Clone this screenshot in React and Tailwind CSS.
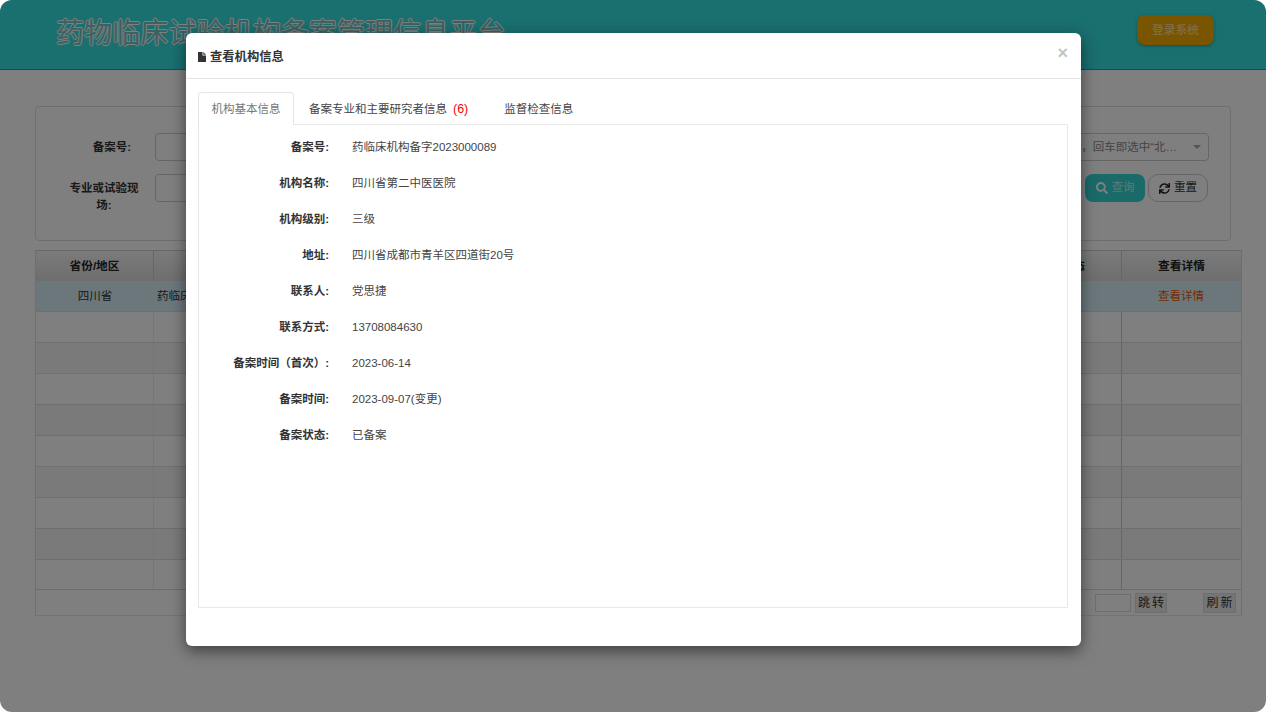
import React from 'react';
import { FaSearch, FaSync } from 'react-icons/fa';

const rows = [
  ['备案号', '药临床机构备字2023000089'],
  ['机构名称', '四川省第二中医医院'],
  ['机构级别', '三级'],
  ['地址', '四川省成都市青羊区四道街20号'],
  ['联系人', '党思捷'],
  ['联系方式', '13708084630'],
  ['备案时间（首次）', '2023-06-14'],
  ['备案时间', '2023-09-07(变更)'],
  ['备案状态', '已备案'],
];

const blankRows = [0, 1, 2, 3, 4, 5, 6, 7];

function BlankRow({ i, tall }) {
  return (
    <div className={`${tall ? 'h-[31px]' : 'h-[30px]'} flex border-t border-[#dedede] ${i % 2 === 0 ? 'bg-white' : 'bg-[#f4f4f4]'}`}>
      <span className="w-[118px] border-r border-[#ececec]" />
      <span className="flex-1" />
      <span className="w-[120px] border-l border-[#cccccc]" />
    </div>
  );
}

function Background() {
  return (
    <div className="h-[712px] w-[1266px] rounded-[12px] bg-white overflow-hidden">
      <header className="h-[70px] flex justify-between pl-[56px] pr-[52px] bg-[#35dede] border-b border-[#1aa0a0]">
        <h1 className="mt-[16px] h-[36px] text-[28.1px] leading-[36px] text-[#74c4c4] [text-shadow:1px_0_0_#fff,-1px_0_0_#fff,0_1px_0_#fff,0_-1px_0_#fff]">药物临床试验机构备案管理信息平台</h1>
        <button className="mt-[15px] pt-[2px] w-[77px] h-[30px] rounded-[8px] bg-[#f5ab00] text-[11.8px] text-white/70 shadow-[0_1px_3px_rgba(0,0,0,0.3)]">登录系统</button>
      </header>
      <main className="pl-[35px] pt-[36px]">
        <section className="w-[1196px] h-[135px] border border-[#ddd] rounded-[4px] flex flex-col gap-[13px] pt-[26px] text-[11.5px] font-bold text-[#333]">
          <div className="flex items-center h-[28px]">
            <span className="w-[95px] text-right pt-[1px]">备案号:</span>
            <div className="ml-[24px] w-[300px] h-[28px] border border-[#ccc] rounded-[4px]" />
            <div className="ml-auto mr-[21px] w-[340px] h-[28px] border border-[#ccc] rounded-[4px] flex items-center justify-end pr-[7px] font-normal text-[#888]">
              <span className="whitespace-nowrap pt-[1px]">输入省份/地区文字，回车即选中“北…</span>
              <span className="ml-[16px] w-0 h-0 border-x-[4px] border-x-transparent border-t-[4px] border-t-[#aaa]" />
            </div>
          </div>
          <div className="flex items-center h-[28px]">
            <span className="self-start mt-[6px] w-[103px] pl-[33px] text-center leading-[17px]">专业或试验现场:</span>
            <div className="ml-[16px] w-[300px] h-[28px] border border-[#ccc] rounded-[4px]" />
            <button className="ml-auto w-[60px] h-[28px] rounded-[8px] bg-[#34d4d4] text-white/70 font-normal flex items-center justify-center gap-[4px]">
              <FaSearch className="w-[12px] h-[12px] text-white" />查询
            </button>
            <button className="ml-[3px] mr-[22px] w-[60px] h-[28px] rounded-[10px] border border-[#ccc] bg-white text-[#333] font-normal flex items-center justify-center gap-[4px]">
              <FaSync className="w-[11px] h-[11px] text-[#222]" />重置
            </button>
          </div>
        </section>
        <section className="mt-[9px] w-[1207px] border-x border-[#ddd]">
          <div className="h-[31px] flex items-center text-[11.7px] font-bold text-[#222] bg-gradient-to-b from-[#f6f6f6] to-[#dcdcdc] border-t border-[#d0d0d0]">
            <span className="w-[118px] text-center border-r border-[#ccc] leading-[30px]">省份/地区</span>
            <span className="flex-1 text-right pr-[36px]">备案状态</span>
            <span className="w-[120px] text-center border-l border-[#ccc] leading-[30px]">查看详情</span>
          </div>
          <div className="h-[30px] flex items-center text-[11.5px] text-[#333] bg-[#d9eef8] pt-[1px]">
            <span className="w-[118px] text-center">四川省</span>
            <span className="flex-1 pl-[3px]">药临床机构备字</span>
            <span className="w-[120px] text-center text-[#e8590c]">查看详情</span>
          </div>
          {blankRows.map((i) => (
            <BlankRow key={i} i={i} tall />
          ))}
          <BlankRow i={8} />
          <div className="h-[27px] flex items-center justify-end border-t border-[#d8d8d8] border-b border-b-[#e8e8e8] text-[12px] text-[#333] tracking-[2px]">
            <div className="w-[36px] h-[18px] border border-[#ddd]" />
            <button className="ml-[4px] pl-[2px] w-[32px] h-[20px] bg-[#ebebeb] border border-[#ddd]">跳转</button>
            <button className="ml-[36px] mr-[5px] pl-[2px] w-[33px] h-[20px] bg-[#ebebeb] border border-[#ddd]">刷新</button>
          </div>
        </section>
      </main>
    </div>
  );
}

function Modal() {
  return (
    <div className="absolute left-[186px] top-[33px] w-[895px] h-[613px] bg-white rounded-[6px] shadow-[0_5px_15px_rgba(0,0,0,0.5)]">
      <div className="h-[46px] border-b border-[#e5e5e5] flex items-center pl-[12px] pr-[13px] pt-[3px]">
        <svg viewBox="0 0 8 10" className="w-[8px] h-[10px] mr-[4px]" fill="#333" aria-hidden="true">
          <path d="M0 0H4.5V3.5H8V10H0Z" />
          <path d="M5.3 0L8 2.7H5.3Z" />
        </svg>
        <h2 className="text-[12.3px] font-bold text-[#333]">查看机构信息</h2>
        <span className="ml-auto text-[18px] leading-none font-bold text-[#c4c4c4] pb-[8px]">×</span>
      </div>
      <div className="pt-[13px] px-[12px] pb-[38px]">
        <div className="flex h-[33px] text-[11.5px] text-[#444]">
          <span className="w-[96px] h-[33px] pt-[2px] flex items-center justify-center text-[#777] bg-white border border-b-0 border-[#e5e5e5] rounded-t-[4px] relative z-10">机构基本信息</span>
          <span className="ml-[15px] pt-[2px] flex items-center">备案专业和主要研究者信息<span className="ml-[6px] text-[#f00] text-[12.5px]">(6)</span></span>
          <span className="ml-[36px] pt-[2px] flex items-center">监督检查信息</span>
        </div>
        <div className="mt-[-1px] w-[870px] h-[484px] border border-[#e8e8e8] pt-[5px] text-[11.5px]">
          {rows.map(([k, v]) => (
            <div key={k} className="h-[36px] flex items-center">
              <span className="w-[130px] text-right font-bold text-[#333]">{k}:</span>
              <span className="ml-[23px] text-[#444]">{v}</span>
            </div>
          ))}
        </div>
      </div>
    </div>
  );
}

export default function App() {
  return (
    <div className="relative w-[1266px] h-[712px] overflow-hidden bg-white font-['Liberation_Sans','Noto_Sans_CJK_SC',sans-serif]">
      <Background />
      <div className="absolute inset-0 rounded-[12px] bg-black/50" />
      <Modal />
    </div>
  );
}
